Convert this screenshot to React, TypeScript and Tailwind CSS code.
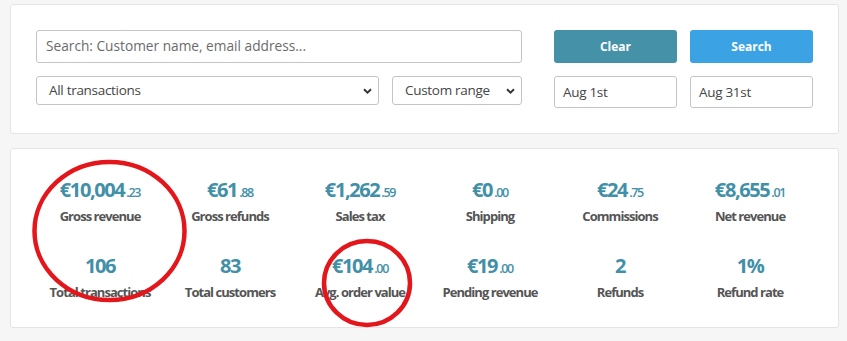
import React from 'react';

const STATS = [
  { value: '€10,004', cents: '23', label: 'Gross revenue' },
  { value: '€61', cents: '88', label: 'Gross refunds' },
  { value: '€1,262', cents: '59', label: 'Sales tax' },
  { value: '€0', cents: '00', label: 'Shipping' },
  { value: '€24', cents: '75', label: 'Commissions' },
  { value: '€8,655', cents: '01', label: 'Net revenue' },
  { value: '106', label: 'Total transactions' },
  { value: '83', label: 'Total customers' },
  { value: '€104', cents: '00', label: 'Avg. order value' },
  { value: '€19', cents: '00', label: 'Pending revenue' },
  { value: '2', label: 'Refunds' },
  { value: '1%', label: 'Refund rate' },
];

const Chevron = () => (
  <svg width="9" height="6" viewBox="0 0 9 6" className="absolute right-[6px] top-1/2 -translate-y-1/2">
    <path d="M1 1.2 L4.5 4.6 L8 1.2" fill="none" stroke="#333" strokeWidth="1.9" />
  </svg>
);

const Select = ({ label, className }: { label: string; className: string }) => (
  <div className={`relative h-[29px] rounded-[3px] border border-[#c4c4c4] bg-white flex items-center pl-[12px] text-[13.5px] tracking-[-0.3px] text-[#454545] ${className}`}>
    {label}
    <Chevron />
  </div>
);

export default function App() {
  return (
    <div className="min-h-[341px] bg-[#f6f6f6] pt-[4px] pl-[10px] pr-[8px] font-['Open_Sans',sans-serif]">
      {/* Filters */}
      <div className="h-[130px] rounded-[3px] border border-[#e4e4e4] bg-white pt-[25px] pl-[25px] flex items-start gap-[32px]">
        <div className="w-[486px] flex flex-col gap-[13px]">
          <div className="h-[33px] rounded-[3px] border border-[#c4c4c4] flex items-center pl-[9px] text-[13.7px] text-[#6b6b6b]">
            Search: Customer name, email address...
          </div>
          <div className="flex gap-[13px]">
            <Select label="All transactions" className="w-[343px]" />
            <Select label="Custom range" className="w-[130px]" />
          </div>
        </div>
        <div className="grid grid-cols-[123px_123px] gap-x-[13px] gap-y-[13px]">
          <button className="h-[33px] rounded-[3px] bg-[#4591a8] text-white text-[12px] font-bold">Clear</button>
          <button className="h-[33px] rounded-[3px] bg-[#3ba3e3] text-white text-[12px] font-bold">Search</button>
          <div className="h-[32px] rounded-[3px] border border-[#c4c4c4] flex items-center pl-[8px] text-[13.5px] tracking-[-0.3px] text-[#454545]">Aug 1st</div>
          <div className="h-[32px] rounded-[3px] border border-[#c4c4c4] flex items-center pl-[8px] text-[13.5px] tracking-[-0.3px] text-[#454545]">Aug 31st</div>
        </div>
      </div>

      {/* Stats */}
      <div className="relative mt-[14px] h-[180px] rounded-[3px] border border-[#e4e4e4] bg-white pt-[29px] pl-[24px]">
        <div className="grid grid-cols-[repeat(6,130px)] gap-y-[29px]">
          {STATS.map((s) => (
            <div key={s.label} className="flex flex-col items-center">
              <div className="h-[24px] leading-[24px] text-[#4190a8] font-bold text-[20px] tracking-[-1.4px]">
                {s.value}
                {s.cents && <span className="text-[12.5px] font-semibold tracking-[-1.3px] ml-[2px]">.{s.cents}</span>}
              </div>
              <div className="mt-[5px] h-[18px] leading-[18px] text-[13px] font-bold text-[#555] tracking-[-0.95px]">{s.label}</div>
            </div>
          ))}
        </div>
      </div>

      {/* Annotations */}
      <svg className="absolute left-0 top-0 pointer-events-none" width="847" height="341">
        <ellipse cx="109.5" cy="231" rx="75" ry="69" fill="none" stroke="#e3161b" strokeWidth="4.5" />
        <ellipse cx="367" cy="283" rx="43" ry="42" fill="none" stroke="#e3161b" strokeWidth="4.5" />
      </svg>
    </div>
  );
}
